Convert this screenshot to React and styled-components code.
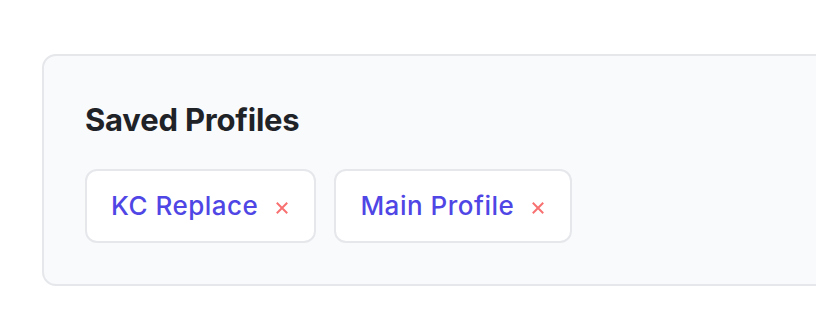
import React from 'react';
import styled, { createGlobalStyle } from 'styled-components';

const GlobalStyle = createGlobalStyle`
  html, body {
    margin: 0;
    padding: 0;
    background: #ffffff;
    font-family: Inter, "Noto Sans", "Liberation Sans", sans-serif;
  }
`

// outer page, card runs off the right edge
const Page = styled.div`
  width: 816px;
  height: 316px;
  overflow: hidden;
  padding: 54px 0 0 42px;
  box-sizing: border-box;
`

const Card = styled.section`
  width: 860px;
  box-sizing: border-box;
  background-color: #f9fafb;
  border: 2px solid #e5e7eb;
  border-radius: 14px;
  padding: 44px 41px 41px;
`

const Title = styled.h2`
  margin: 0;
  font-size: 31px;
  line-height: 40px;
  font-weight: 700;
  color: #1f2328;
  letter-spacing: -0.2px;
`

const ChipRow = styled.div`
  display: flex;
  gap: 18px;
  margin-top: 29px;
`

const Chip = styled.div`
  display: flex;
  align-items: center;
  gap: 17px;
  background-color: #ffffff;
  border: 2px solid #e5e7eb;
  border-radius: 12px;
  padding: 19px 26px 19px 24px;
`

const ChipLabel = styled.span`
  font-size: 26px;
  line-height: 32px;
  font-weight: 500;
  letter-spacing: 0.5px;
  color: #4f46e5;
`

const Remove = styled.button`
  display: flex;
  align-items: center;
  justify-content: center;
  border: none;
  background: transparent;
  padding: 0;
  width: 13px;
  height: 13px;
  margin-top: 3px;
  cursor: pointer;
`

const profiles = ['KC Replace', 'Main Profile'];

export default function App() {
  return (
    <>
      <GlobalStyle />
      <Page>
        <Card>
          <Title>Saved Profiles</Title>
          <ChipRow>
            {profiles.map((name) => (
              <Chip key={name}>
                <ChipLabel>{name}</ChipLabel>
                <Remove aria-label={`Remove ${name}`}>
                  <svg width="12" height="12" viewBox="0 0 12 12">
                    <path d="M1.5 1.5 L10.5 10.5 M10.5 1.5 L1.5 10.5" stroke="#f87171" strokeWidth="2" strokeLinecap="square" />
                  </svg>
                </Remove>
              </Chip>
            ))}
          </ChipRow>
        </Card>
      </Page>
    </>
  );
}
